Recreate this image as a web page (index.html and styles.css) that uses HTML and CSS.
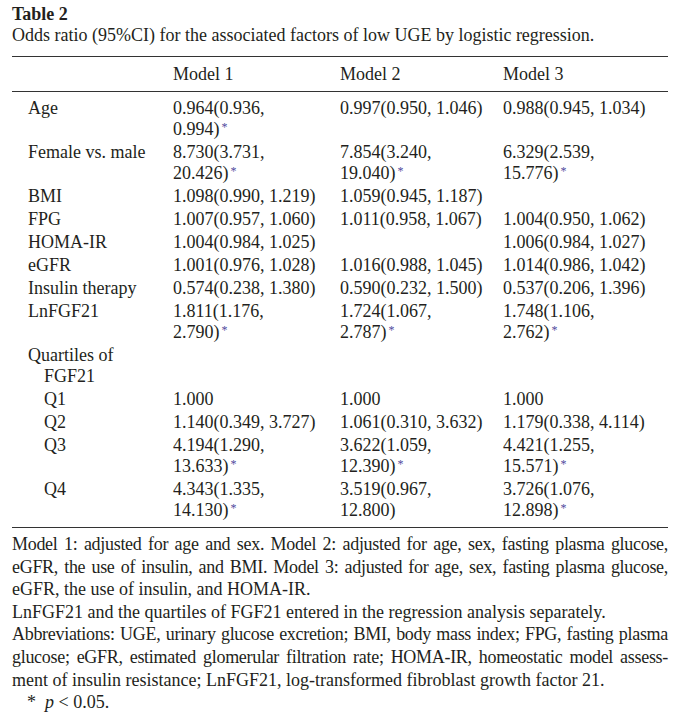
FILE: index.html
```html
<!DOCTYPE html>
<html>
<head>
<meta charset="utf-8">
<link rel="stylesheet" href="styles.css">
</head>
<body>
<div class="page">
  <div class="title">Table 2</div>
  <div class="caption">Odds ratio (95%CI) for the associated factors of low UGE by logistic regression.</div>
  <table class="tbl">
    <colgroup>
      <col class="c0"><col class="c1"><col class="c2"><col class="c3">
    </colgroup>
    <thead>
      <tr><th></th><th>Model 1</th><th>Model 2</th><th>Model 3</th></tr>
    </thead>
    <tbody>
      <tr class="first"><td>Age</td><td>0.964(0.936,<br>0.994)<sup>*</sup></td><td>0.997(0.950, 1.046)</td><td>0.988(0.945, 1.034)</td></tr>
      <tr><td>Female vs. male</td><td>8.730(3.731,<br>20.426)<sup>*</sup></td><td>7.854(3.240,<br>19.040)<sup>*</sup></td><td>6.329(2.539,<br>15.776)<sup>*</sup></td></tr>
      <tr><td>BMI</td><td>1.098(0.990, 1.219)</td><td>1.059(0.945, 1.187)</td><td></td></tr>
      <tr><td>FPG</td><td>1.007(0.957, 1.060)</td><td>1.011(0.958, 1.067)</td><td>1.004(0.950, 1.062)</td></tr>
      <tr><td>HOMA-IR</td><td>1.004(0.984, 1.025)</td><td></td><td>1.006(0.984, 1.027)</td></tr>
      <tr><td>eGFR</td><td>1.001(0.976, 1.028)</td><td>1.016(0.988, 1.045)</td><td>1.014(0.986, 1.042)</td></tr>
      <tr><td>Insulin therapy</td><td>0.574(0.238, 1.380)</td><td>0.590(0.232, 1.500)</td><td>0.537(0.206, 1.396)</td></tr>
      <tr><td>LnFGF21</td><td>1.811(1.176,<br>2.790)<sup>*</sup></td><td>1.724(1.067,<br>2.787)<sup>*</sup></td><td>1.748(1.106,<br>2.762)<sup>*</sup></td></tr>
      <tr><td class="hang">Quartiles of<br>FGF21</td><td></td><td></td><td></td></tr>
      <tr><td class="sub">Q1</td><td>1.000</td><td>1.000</td><td>1.000</td></tr>
      <tr><td class="sub">Q2</td><td>1.140(0.349, 3.727)</td><td>1.061(0.310, 3.632)</td><td>1.179(0.338, 4.114)</td></tr>
      <tr><td class="sub">Q3</td><td>4.194(1.290,<br>13.633)<sup>*</sup></td><td>3.622(1.059,<br>12.390)<sup>*</sup></td><td>4.421(1.255,<br>15.571)<sup>*</sup></td></tr>
      <tr class="last"><td class="sub">Q4</td><td>4.343(1.335,<br>14.130)<sup>*</sup></td><td>3.519(0.967,<br>12.800)</td><td>3.726(1.076,<br>12.898)<sup>*</sup></td></tr>
    </tbody>
  </table>
  <div class="notes">
    <p><span class="ln">Model 1: adjusted for age and sex. Model 2: adjusted for age, sex, fasting plasma glucose,</span><span class="ln">eGFR, the use of insulin, and BMI. Model 3: adjusted for age, sex, fasting plasma glucose,</span><span class="end">eGFR, the use of insulin, and HOMA-IR.</span></p>
    <p>LnFGF21 and the quartiles of FGF21 entered in the regression analysis separately.</p>
    <p><span class="ln">Abbreviations: UGE, urinary glucose excretion; BMI, body mass index; FPG, fasting plasma</span><span class="ln">glucose; eGFR, estimated glomerular filtration rate; HOMA-IR, homeostatic model assess-</span><span class="end">ment of insulin resistance; LnFGF21, log-transformed fibroblast growth factor 21.</span></p>
    <p class="sig"><span class="ast">*</span><i>p</i> &lt; 0.05.</p>
  </div>
</div>
</body>
</html>
```

FILE: styles.css
```css
html, body {
  margin: 0;
  padding: 0;
  background: #ffffff;
}
.page {
  padding: 4px 12px 0 12px;
  font-family: "Liberation Serif", serif;
  font-size: 18px;
  color: #231f20;
}
.title {
  font-weight: bold;
  line-height: 20px;
}
.caption {
  line-height: 22px;
  margin-bottom: 10px;
}
.tbl {
  width: 100%;
  border-collapse: collapse;
  border-top: 1px solid #333;
  border-bottom: 1px solid #333;
}
.c0 { width: 149px; }
.c1 { width: 167px; }
.c2 { width: 163px; }
.c3 { width: auto; }
.tbl th {
  text-align: left;
  font-weight: normal;
  padding: 6px 0 6px 12px;
  line-height: 22px;
  border-bottom: 1px solid #333;
}
.tbl td {
  vertical-align: top;
  padding: 1px 0 1px 12px;
  line-height: 21px;
  white-space: nowrap;
}
.tbl td:first-child { padding-left: 16px; }
.tbl td.hang { padding-left: 32px; text-indent: -16px; }
.tbl td.sub { padding-left: 32px; }
.tbl tr.first td { padding-top: 6px; }
.tbl tr.last td { padding-bottom: 6px; }
sup {
  font-size: 12px;
  line-height: 0;
  vertical-align: 4px;
  color: #4f4a9c;
  margin-left: 2px;
}
.notes { padding-top: 5px; }
.notes p {
  margin: 0;
  line-height: 22.6px;
}
.notes .ln {
  display: block;
  white-space: nowrap;
  letter-spacing: -0.3px;
  text-align: justify;
  text-align-last: justify;
}
.notes .end {
  display: block;
  white-space: nowrap;
}
.sig { padding-left: 15px; }
.ast { color: #231f20; margin-right: 9px; }
```
